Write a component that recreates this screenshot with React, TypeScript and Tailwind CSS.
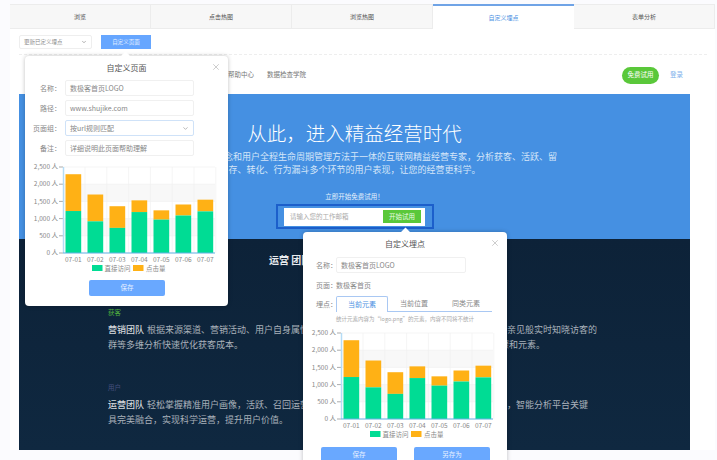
import { X, ChevronDown } from "lucide-react";

const tabs = ["浏览", "点击热图", "浏览热图", "自定义埋点", "表单分析"];
const direct = [1220, 920, 730, 1190, 970, 1090, 1210];
const total = [2290, 1700, 1360, 1530, 1240, 1410, 1550];
const days = ["07-01", "07-02", "07-03", "07-04", "07-05", "07-06", "07-07"];
const ticks = ["2,500 人", "2,000 人", "1,500 人", "1,000 人", "500 人", "0 人"];

const toY = (v: number) => 8 + ((2500 - v) / 2500) * 86;

function Chart() {
  return (
    <svg width="203" height="114" className="block" fontSize="6.5" fill="#888">
      <rect x="38" y={toY(2000)} width="152" height="17.2" fill="#f8f8f8" />
      <rect x="38" y={toY(1000)} width="152" height="17.2" fill="#f8f8f8" />
      {ticks.map((t, i) => (
        <g key={t}>
          <line x1="38" x2="190" y1={8 + i * 17.2} y2={8 + i * 17.2} stroke="#f1f1f1" strokeWidth="0.7" />
          <line x1="34" x2="38" y1={8 + i * 17.2} y2={8 + i * 17.2} stroke="#888" strokeWidth="0.7" />
          <text x="33" y={10.2 + i * 17.2} textAnchor="end">
            {t}
          </text>
        </g>
      ))}
      {days.map((d, i) => (
        <g key={d}>
          <line x1={60 + i * 21.8} x2={60 + i * 21.8} y1="8" y2="94" stroke="#f1f1f1" strokeWidth="0.7" />
          <rect x={40.5 + i * 22} y={toY(total[i])} width="15.7" height={toY(direct[i]) - toY(total[i])} fill="#ffb115" />
          <rect x={40.5 + i * 22} y={toY(direct[i])} width="15.7" height={94 - toY(direct[i])} fill="#00dc94" />
          <text x={48.3 + i * 22} y="102.5" textAnchor="middle">
            {d}
          </text>
        </g>
      ))}
      <line x1="38.5" x2="38.5" y1="8" y2="94" stroke="#b5dcf6" strokeWidth="1.5" />
      <line x1="38" x2="190" y1="94" y2="94" stroke="#62b3e6" strokeWidth="1" />
      <rect x="67" y="106" width="10.5" height="6" fill="#00dc94" />
      <text x="79.5" y="112">直接访问</text>
      <rect x="108" y="106" width="10.5" height="6" fill="#ffb115" />
      <text x="121" y="112">点击量</text>
    </svg>
  );
}

function Field({ label, value, select }: { label: string; value: string; select?: boolean }) {
  return (
    <div className="flex items-center gap-1 text-[7px] text-[#888]">
      <span className="w-9 text-right whitespace-nowrap">{label}</span>
      <div
        className={`flex h-4 w-[129px] items-center justify-between rounded-[2px] border px-1 ${
          select ? "border-[#cfe2f8]" : "border-[#f0f0f0]"
        }`}
      >
        {value}
        {select && <ChevronDown size={7} className="text-[#888]" />}
      </div>
    </div>
  );
}

function SaveButton({ text }: { text: string }) {
  return (
    <button className="h-4 w-[76px] rounded-[2px] bg-[#69a8ff] text-[6.5px] text-[#e8f1ff]">{text}</button>
  );
}

function PagePopover() {
  return (
    <div className="absolute top-[56px] left-[25px] w-[203px] rounded bg-white pb-[10px] shadow-[0_0_4px_rgba(0,0,0,0.25)]">
      <div className="absolute -top-[3px] left-[97px] h-[7px] w-[7px] rotate-45 bg-white" />
      <X size={10} strokeWidth={1} className="absolute top-[6px] right-[7px] text-[#888]" />
      <div className="relative pt-[6px] text-center text-[8px] leading-3 text-[#555]">自定义页面</div>
      <div className="mt-[6px] flex flex-col gap-1">
        <Field label="名称：" value="数极客首页LOGO" />
        <Field label="路径：" value="www.shujike.com" />
        <Field label="页面组：" value="按url规则匹配" select />
        <Field label="备注：" value="详细说明此页面帮助理解" />
      </div>
      <div className="mt-[3px]">
        <Chart />
      </div>
      <div className="mt-[7px] flex justify-center pl-[1px]">
        <SaveButton text="保存" />
      </div>
    </div>
  );
}

function PointPopover() {
  return (
    <div className="absolute top-[232px] left-[303px] w-[204px] rounded bg-white pb-[10px] shadow-[0_0_4px_rgba(0,0,0,0.25)]">
      <div className="absolute -top-[3px] left-[99px] h-[7px] w-[7px] rotate-45 bg-white" />
      <X size={10} strokeWidth={1} className="absolute top-[6px] right-[7px] text-[#888]" />
      <div className="relative pt-[6px] text-center text-[8px] leading-3 text-[#555]">自定义埋点</div>
      <div className="mt-[7px] flex items-center pl-[13px] text-[7px] text-[#888]">
        <span className="w-5 whitespace-nowrap">名称：</span>
        <div className="flex h-4 w-[130px] items-center rounded-[2px] border border-[#f0f0f0] px-1">数极客首页LOGO</div>
      </div>
      <div className="mt-1 flex h-4 items-center pl-[13px] text-[7px] text-[#888]">
        <span className="w-5 whitespace-nowrap">页面：</span>
        <span>数极客首页</span>
      </div>
      <div className="mt-[3px] flex items-end pl-[13px] text-[7px] text-[#888]">
        <span className="w-5 self-center whitespace-nowrap">埋点：</span>
        <div className="flex w-[156px] border-b border-[#a9c8f3] text-center">
          <div className="-mb-px h-[16px] w-[52px] rounded-t-[2px] border border-b-0 border-[#a9c8f3] bg-white leading-[15px] text-[#4a90e2]">
            当前元素
          </div>
          <div className="h-[15px] w-[52px] leading-[15px]">当前位置</div>
          <div className="h-[15px] w-[52px] leading-[15px]">同类元素</div>
        </div>
      </div>
      <p className="mt-[3px] pl-[33px] text-[5.5px] leading-[9px] text-[#aaa]">统计元素内容为“logo.png”的元素，内容不同将不统计</p>
      <div className="mt-[1px]">
        <Chart />
      </div>
      <div className="mt-[8px] flex gap-[17px] pl-[18px]">
        <SaveButton text="保存" />
        <SaveButton text="另存为" />
      </div>
    </div>
  );
}

export default function App() {
  return (
    <div className="relative h-[460px] w-[717px] overflow-hidden bg-[#fbfbfe] pt-1 pl-[10px] font-['Noto_Sans_CJK_SC',sans-serif]">
      <div className="h-[446px] w-[705px] bg-white">
        {/* tabs */}
        <div className="flex h-[25px] text-[6px] text-[#555]">
          {tabs.map((t, i) => (
            <div
              key={t}
              className={
                i === 3
                  ? "flex w-[141px] items-center justify-center border-t-2 border-[#6fa3e6] bg-white text-[#4a90e2]"
                  : "flex w-[141px] items-center justify-center border-t border-r border-b border-[#ececec] bg-[#f7f7f7]"
              }
            >
              {t}
            </div>
          ))}
        </div>

        {/* toolbar */}
        <div className="mr-2 ml-[9px] flex h-[26px] items-start gap-[9px] border-b border-dashed border-[#eeeeee] pt-[6px]">
          <div className="flex h-[14px] w-[73px] items-center justify-between rounded-[2px] border border-[#eeeeee] px-1 text-[5.5px] text-[#888]">
            更新已定义埋点
            <ChevronDown size={6} className="text-[#666]" />
          </div>
          <button className="h-[14px] w-[50px] bg-[#66a6ff] text-[5.5px] text-[#e8f1ff]">自定义页面</button>
        </div>

        {/* site header */}
        <div className="flex h-[39px] items-center pr-[32px] pl-[218px] text-[6.5px] text-[#777]">
          <span>帮助中心</span>
          <span className="ml-[13px]">数据检查学院</span>
          <button className="mt-[1px] ml-auto h-[17px] w-[37px] rounded-full bg-[#5ac83a] text-[6.5px] text-white">免费试用</button>
          <span className="ml-[11px] text-[#7fb2ec]">登录</span>
        </div>

        <div className="ml-[9px] w-[671px]">
          {/* hero */}
          <div className="flex h-[145px] flex-col items-center bg-[#4590e2] text-white">
            <h1 className="mt-[27px] text-[19.5px] leading-6 font-light">从此，进入精益经营时代</h1>
            <p className="mt-[5px] text-[9px] leading-[13px] whitespace-nowrap text-[#d5e6f9]">
              数极客是集数据理念和用户全程生命周期管理方法于一体的互联网精益经营专家，分析获客、活跃、留
            </p>
            <p className="text-[9px] leading-[13px] whitespace-nowrap text-[#d5e6f9]">
              存、转化、行为漏斗多个环节的用户表现，让您的经营更科学。
            </p>
            <p className="mt-[15px] text-[6.5px] leading-[10px] text-[#e6f0fc]">立即开始免费试用！</p>
            <div className="mt-[3px] flex h-[25px] w-[158px] items-center justify-center border-2 border-[#1c5fcb]">
              <div className="flex h-[18px] w-[141px] items-center justify-between bg-white pr-[4px] pl-[6px] text-[6.5px] text-[#aaa]">
                请输入您的工作邮箱
                <button className="h-[13px] w-[38px] bg-[#5ac83a] text-[6.5px] text-[#eafbe4]">开始试用</button>
              </div>
            </div>
          </div>

          {/* dark section */}
          <div className="h-[211px] bg-gradient-to-b from-[#0d2238] to-[#0f2840] pt-[15px] text-[9px] text-[#a9b1ba]">
            <div className="pl-[250px] text-[10px] leading-3 font-bold text-[#e8ebee]">运营 团队</div>
            <div className="pl-[89px]">
              <div className="mt-[41px] text-[6.5px] leading-[10px] text-[#4fae3e]">获客</div>
              <p className="mt-[5px] leading-[15px] whitespace-nowrap">
                <b className="mr-[3px] font-medium text-[#d5d9dd]">营销团队</b>
                根据来源渠道、营销活动、用户自身属性等维度细分用户，产品团队通过热图和点击分析如亲见般实时知晓访客的
              </p>
              <div className="flex w-[437px] justify-between leading-[15px]">
                <span>群等多维分析快速优化获客成本。</span>
                <span>优化转化路径的步骤和元素。</span>
              </div>
              <div className="mt-[30px] text-[6.5px] leading-[10px] text-[#46507f]">用户</div>
              <p className="mt-[5px] leading-[15px] whitespace-nowrap">
                <b className="mr-[3px] font-medium text-[#d5d9dd]">运营团队</b>
                轻松掌握精准用户画像，活跃、召回运营活动一目了然，数据埋点无需代码，灵活定义节点，智能分析平台关键
              </p>
              <p className="leading-[15px]">具完美融合，实现科学运营，提升用户价值。</p>
            </div>
          </div>
        </div>
      </div>

      <PagePopover />
      <PointPopover />
    </div>
  );
}
